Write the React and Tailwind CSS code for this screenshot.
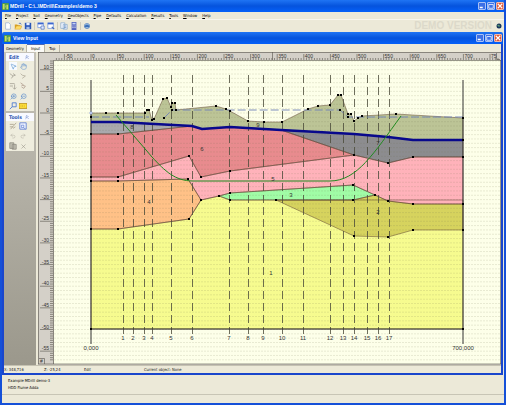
import React from 'react';
import { MousePointer2, Hand, ZoomIn, ZoomOut, Undo2, Redo2, X, ChevronsUp } from 'lucide-react';

const menus = ['File', 'Project', 'Soil', 'Geometry', 'GeoObjects', 'Pipe', 'Defaults', 'Calculation', 'Results', 'Tools', 'Window', 'Help'];

const sx = (v) => 91 + v * 0.532;
const sz = (z) => 113 - z * 4.33;
const range = (from, to, step) => Array.from({ length: Math.floor((to - from) / step) + 1 }, (_, i) => from + i * step);

const layers = [
    { fill: '#f6fb8f', pts: '91,229 118,229 189,219 201,200 219,196 230,200 354,200 463,200 463,329 91,329' },
    { fill: '#e88b8e', pts: '91,134 118,134 192,126 202,129 230,127 281,130 354,155 230,171 201,177 189,156 118,177 91,177' },
    { fill: '#ffb2ba', pts: '91,177 118,177 189,156 201,177 230,171 354,155 388,163 413,157 463,157 463,204 413,204 388,201 375,195 353,185 230,193 219,196 201,200 188,179 118,181 91,181' },
    { fill: '#ffc187', pts: '91,181 118,181 188,179 201,200 189,219 118,229 91,229' },
    { fill: '#a0fca6', pts: '219,196 230,193 353,185 375,195 353,200 230,200' },
    { fill: '#d6d35e', pts: '276,200 353,200 375,195 388,201 413,204 463,204 463,230 413,230 388,237 354,236' },
    { fill: '#a9a9ad', pts: '91,122 118,122 192,126 118,134 91,134' },
    { fill: '#8c8c8f', pts: '281,130 354,134 388,137 413,140 463,140 463,157 413,157 388,163 354,155' },
    { fill: '#bcc496', pts: '91,113 145,113 147,110 149,110 152,120 154,119 163,99 167,98 171,107 172,103 175,103 176,110 216,106 226,109 230,111 248,121 264,122 282,122 308,109 318,106 330,105 338,95 341,95 348,114 351,114 354,121 358,118 362,116 396,114 463,118 463,140 413,140 388,137 354,134 230,127 202,129 192,126 118,122 91,122' },
];

const nodes = [
    [91, 117], [106, 113], [118, 113], [145, 113], [147, 110], [149, 110], [152, 120], [154, 119], [164, 118], [163, 99], [167, 98], [171, 107], [172, 103], [175, 103], [172, 110], [176, 110],
    [216, 106], [226, 109], [230, 111], [248, 121], [264, 122], [282, 122], [308, 109], [318, 106], [330, 105], [338, 95], [341, 95], [340, 110], [348, 114], [351, 114], [348, 117], [354, 121], [358, 118], [362, 116], [396, 114], [463, 118],
    [91, 134], [118, 134], [91, 177], [118, 177], [189, 156], [201, 177], [230, 171], [354, 155], [388, 163], [413, 157], [463, 157],
    [91, 181], [118, 181], [188, 179], [201, 200], [189, 219], [118, 229], [91, 229], [219, 196], [230, 193], [353, 185], [375, 195], [353, 200], [230, 200], [276, 200],
    [388, 201], [413, 204], [463, 204], [463, 230], [413, 230], [388, 237], [354, 236], [463, 140], [91, 329], [463, 329],
];

const sections = [123, 133, 144, 152, 171, 192, 229, 248, 263, 282, 303, 330, 343, 354, 367, 378, 389];
const soilLabels = [['1', 271, 275], ['2', 378, 214], ['3', 291, 197], ['4', 149, 204], ['5', 273, 181], ['6', 202, 151], ['7', 378, 145], ['8', 132, 129], ['9', 258, 127]];

const Chart = () => (
    <svg viewBox="38 52 463 313" className="block h-auto w-full font-['Liberation_Sans',sans-serif]" role="img" aria-label="Soil profile">
        <rect x="38" y="52" width="463" height="313" fill="#d4d0c8" />
        <rect x="54" y="60" width="447" height="304" fill="#fdffe9" />
        {layers.map((l) => <polygon key={l.fill} points={l.pts} fill={l.fill} />)}
        <g stroke="#707050" strokeOpacity="0.15" strokeWidth="1" strokeDasharray="2 1">
            {range(-57, 12, 1).map((z) => <line key={z} x1="54" x2="500" y1={sz(z)} y2={sz(z)} />)}
        </g>
        <g stroke="#5c4030" strokeWidth="0.5" fill="none">
            {layers.map((l) => <polygon key={l.fill} points={l.pts} />)}
        </g>
        <g stroke="#4a4a38" strokeWidth="0.8" strokeDasharray="8 4">
            {sections.map((x) => <line key={x} x1={x + 0.5} x2={x + 0.5} y1="75" y2="334" />)}
        </g>
        <path d="M91 117H149M164 118L172 110H340L348 117H463" fill="none" stroke="#7182b8" strokeWidth="0.9" strokeDasharray="8 3" />
        <path d="M91 80V344M463 80V344M91 329H463" fill="none" stroke="#333" strokeWidth="1" />
        <polyline points="91,122 118,122 192,126 202,129 230,127 281,130 354,134 388,137 413,140 463,140" fill="none" stroke="#08088c" strokeWidth="2.600" />
        <path d="M116 115L152 157C165 171 175 181 193 181H330C357 181 374 153 401 116" fill="none" stroke="#1f8a1f" strokeWidth="1" />
        {nodes.map(([x, y]) => <rect key={`${x}-${y}`} x={x - 1} y={y - 1} width="2" height="2" fill="#000" />)}
        <circle cx="91" cy="113" r="1.200" fill="#fff" stroke="#5a78d0" strokeWidth="0.600" />
        <g fontSize="6" fill="#333" textAnchor="middle">
            {soilLabels.map(([t, x, y]) => <text key={t} x={x} y={y}>{t}</text>)}
            {sections.map((x, i) => <text key={x} x={x} y="340">{i + 1}</text>)}
            <text x="91" y="350">0,000</text>
            <text x="463" y="350">700,000</text>
        </g>
        {/* rulers */}
        <g stroke="#55524a" strokeWidth="0.600">
            {range(-65, 765, 5).map((v) => <line key={v} x1={sx(v)} x2={sx(v)} y1={v % 50 === 0 ? 54 : 58} y2="60" />)}
            {range(-57, 12, 0.5).map((z) => <line key={z} x1={z % 5 === 0 ? 40 : 50} x2="53" y1={sz(z)} y2={sz(z)} />)}
            <path d="M272.500 52V60M38 52.500H501M38.500 52V364M53.500 60V364M38 364H501M54 60.500H501M500.500 60V364" fill="none" />
            <path d="M39 358.500H44.500V364M496.500 53V59.500H500" fill="none" />
        </g>
        <g fontSize="5" fill="#333">
            {range(-50, 700, 50).map((v) => <text key={v} x={sx(v) + 1} y="58">{v}</text>)}
            <text x={sx(750) + 1} y="58">75</text>
            {range(-55, 10, 5).map((z) => <text key={z} x="49" y={sz(z) - 1} textAnchor="end">{z}</text>)}
            <text x="40" y="363">#</text>
        </g>
    </svg>
);

const AppIcon = () => (
    <svg viewBox="0 0 8 8" className="size-[7px] shrink-0">
        <rect width="8" height="8" rx="1" fill="#4c9a52" />
        <path d="M1 7V1H3V7zM5 7V2H7V7z" fill="#c9dc62" />
        <path d="M3 2L5 6" stroke="#8fc070" />
    </svg>
);

const WindowButtons = () => (
    <div className="flex gap-px">
        <button aria-label="Minimize" className="size-2 rounded-[1px] border border-[#a9c1f5] bg-[#3d70e6]">
            <svg viewBox="0 0 8 8" className="size-full"><path d="M1 6H5" stroke="#fff" strokeWidth="2" /></svg>
        </button>
        <button aria-label="Restore" className="size-2 rounded-[1px] border border-[#a9c1f5] bg-[#3d70e6]">
            <svg viewBox="0 0 8 8" className="size-full"><path d="M1 2H7V7H1z" stroke="#fff" fill="none" /></svg>
        </button>
        <button aria-label="Close" className="size-2 rounded-[1px] border border-[#f0b8a8] bg-[#e0583a]">
            <svg viewBox="0 0 8 8" className="size-full"><path d="M1 1L7 7M7 1L1 7" stroke="#fff" strokeWidth="1.500" /></svg>
        </button>
    </div>
);

const toolbarGroups = [
    [
        { name: 'New', art: <path d="M2 1H6L8 3V9H2z" fill="#fff" stroke="#8ba5d0" strokeWidth="0.800" /> },
        { name: 'Open', art: <><path d="M1 3H4L5 4H8V8H1z" fill="#d9a021" /><path d="M3 5H10L8 9H1z" fill="#ffdc68" stroke="#c99524" strokeWidth="0.500" /><path d="M6 2Q8 0 9 3" fill="none" stroke="#4a6fb8" /></> },
        { name: 'Save', art: <><path d="M1 1H9V9H1z" fill="#2956b8" /><path d="M3 1H7V4H3z" fill="#e8eefc" /><path d="M3 6H7V9H3z" fill="#a8bfe8" /></> },
    ],
    [
        { name: 'Cascade', art: <><path d="M1 1H8V7H1z" fill="#fff" stroke="#7a9ae0" /><path d="M1 2H8" stroke="#3a66ce" strokeWidth="2" /><path d="M5 5H9V9H5z" fill="#dfe9ff" stroke="#4569b8" strokeWidth="0.800" /></> },
        { name: 'View', art: <><path d="M1 1H8V8H1z" fill="#fff" stroke="#7a9ae0" /><path d="M1 2H8" stroke="#3a66ce" strokeWidth="2" /><path d="M6 6L9 9" stroke="#4569b8" strokeWidth="1.500" /></> },
    ],
    [
        { name: 'Report', art: <><path d="M1 1H6V8H1zM4 3H9V9H4z" fill="#f4f8ff" stroke="#7aa0c8" strokeWidth="0.800" /><path d="M5 5H8M5 7H8" stroke="#5a86c0" strokeWidth="0.800" /></> },
        { name: 'Calculate', art: <><path d="M2 0H8V10H2z" fill="#5566c0" /><path d="M3 1H7V3H3z" fill="#c4d4f4" /><path d="M3 5H7M3 7H7" stroke="#fff" strokeDasharray="1 0.500" /></> },
    ],
    [
        { name: 'Help', art: <><circle cx="5" cy="5" r="3.500" fill="#3c70b8" /><path d="M2 4Q5 1 8 4M3 7H7" stroke="#b8d4ee" fill="none" /></> },
    ],
];

const Art = ({ children }) => <svg viewBox="0 0 10 10" className="size-2" fill="none" stroke="currentColor">{children}</svg>;

const editTools = [
    ['Select', 'text-[#5a94cd] bg-[#f8faff]', <MousePointer2 className="size-[7px]" />],
    ['Pan', 'text-[#6f9bd0]', <Hand className="size-[7px]" />],
    ['Add point', 'text-[#a5a195]', <Art><path d="M1 2L5 5L3 8M5 2L8 4L5 5" /></Art>],
    ['Add line', 'text-[#b3ac9c]', <Art><path d="M2 2L4 4L8 5L4 8" /></Art>],
    ['Insert', 'text-[#a5a195]', <Art><path d="M1 2H7M1 5H5M7 3V9M5 7L7 9L9 7" /></Art>],
    ['Move', 'text-[#b3a090]', <Art><path d="M2 1L6 4M3 4L8 5L6 8L3 6" /></Art>],
    ['Zoom in', 'text-[#4f84cc]', <ZoomIn className="size-[7px] -scale-x-100" />],
    ['Zoom out', 'text-[#4f84cc]', <ZoomOut className="size-[7px] -scale-x-100" />],
    ['Zoom window', 'text-[#3c70d0]', <Art><path d="M4 1H9V6H4zM4 6L1 9" /></Art>],
    ['Measure', 'text-[#b58a10]', <Art><path d="M0 2H10V8H0z" fill="#ffe13c" /><path d="M2 5H8" strokeDasharray="1 1" /></Art>],
];

const mainTools = [
    ['Edit object', 'text-[#aaa08c]', <Art><path d="M1 3H6M1 6H5M2 9L9 1M5 8L8 6" /></Art>],
    ['Preview', 'text-[#5878d0]', <Art><path d="M1 1H9V9H1z" fill="#f0f4ff" /><path d="M3 4H6V7H3zM6 7L8 9" strokeWidth="0.800" /></Art>],
    ['Undo', 'text-[#b0aca0]', <Undo2 className="size-1.5" />],
    ['Redo', 'text-[#b0aca0]', <Redo2 className="size-1.5" />],
    ['Copy', 'text-[#8e8c82]', <Art><path d="M1 1H6V8H1zM4 3H9V9H4z" fill="#c4c1b4" /></Art>],
    ['Delete', 'text-[#9a968a]', <X className="size-[7px]" />],
];

const ToolPanel = ({ title, tools }) => (
    <section className="bg-[#efedde]">
        <h2 className="flex h-2 items-center justify-between bg-[#f8f9ff] pr-1 pl-[3px] text-[5px] font-bold text-[#3056b0]">
            {title}
            <ChevronsUp className="size-1.5" />
        </h2>
        <div className="grid grid-cols-[auto_auto] justify-start gap-0.5 px-[3px] py-px">
            {tools.map(([name, color, icon]) => (
                <button key={name} aria-label={name} className={`flex size-2 items-center justify-center ${color}`}>{icon}</button>
            ))}
        </div>
    </section>
);

export default function App() {
    return (
        <div className="min-h-screen border-x-2 border-b-2 border-[#1550d8] bg-[#ece9d8] font-['DejaVu_Sans_Condensed','DejaVu_Sans',sans-serif] text-[4px] leading-none text-black">
            <header className="flex h-3 items-center gap-px bg-linear-to-b from-[#1f74f4] via-[#0553dd] to-[#0560f8] text-white">
                <AppIcon />
                <h1 className="flex-1 font-['Liberation_Sans',sans-serif] text-[5px] font-bold">MDrill - C:\..\MDrill\Examples\demo 3</h1>
                <WindowButtons />
            </header>
            <nav className="flex h-[7px] items-center gap-[5px] px-[3px]">
                {menus.map((m) => <button key={m}><span className="underline">{m[0]}</span>{m.slice(1)}</button>)}
            </nav>
            <div className="flex h-[13px] items-center border-t border-[#f8f6ee] px-0.5">
                {toolbarGroups.map((group, i) => (
                    <div key={i} className="mr-0.5 flex gap-0.5 border-r border-[#d0ccba] pr-0.5 last-of-type:border-0">
                        {group.map((b) => (
                            <button key={b.name} aria-label={b.name} className="size-2"><svg viewBox="0 0 10 10" className="size-2">{b.art}</svg></button>
                        ))}
                    </div>
                ))}
                <span className="ml-auto pr-1 font-['Liberation_Sans',sans-serif] text-[10px] font-bold text-[#dcd9ca]">DEMO VERSION</span>
                <svg viewBox="0 0 6 6" className="size-1.5"><circle cx="3" cy="3" r="2.500" fill="#17365c" /><path d="M1 2Q3 1 4 3L3 4z" fill="#5f9d78" /></svg>
            </div>

            <main className="mr-px">
                <div className="flex h-3 items-center gap-0.5 rounded-t-xs bg-linear-to-b from-[#1f74f4] via-[#0553dd] to-[#0560f8] pr-px pl-0.5 text-white">
                    <AppIcon />
                    <h2 className="flex-1 font-['Liberation_Sans',sans-serif] text-[5px] font-bold">View Input</h2>
                    <WindowButtons />
                </div>
                <div className="border-x-2 border-b-2 border-[#1a46cc]">
                    <div className="flex h-2 items-end">
                        <button className="h-[7px] border-r border-[#b8b5a5] px-0.5">Geometry</button>
                        <button className="h-2 border-t border-r border-t-[#4a66b0] border-r-[#b8b5a5] bg-[#fbfaf6] px-1">Input</button>
                        <button className="h-[7px] border-r border-[#b8b5a5] px-1">Top</button>
                    </div>
                    <div className="flex">
                        <aside className="flex w-[34px] shrink-0 flex-col gap-0.5 border-r-2 border-[#ece9d8] bg-linear-to-b from-[#c5c2b8] to-[#9b988c] px-0.5 pt-px">
                            <ToolPanel title="Edit" tools={editTools} />
                            <ToolPanel title="Tools" tools={mainTools} />
                        </aside>
                        <div className="min-w-0 flex-1"><Chart /></div>
                    </div>
                    <div className="flex h-2 items-center border-t border-[#c5c2b2] text-[#222]">
                        <span className="w-10">X: 348,716</span>
                        <span className="w-10">Z: -25,24</span>
                        <span className="w-[60px]">Edit</span>
                        <span>Current object: None</span>
                    </div>
                </div>
            </main>

            <footer>
                <div className="flex h-5 flex-col justify-center gap-[3px] border-b border-[#c8c5b5] px-1.5">
                    <p>Example MDrill demo-3</p>
                    <p>HDD Fiume Adda</p>
                </div>
            </footer>
        </div>
    );
}
